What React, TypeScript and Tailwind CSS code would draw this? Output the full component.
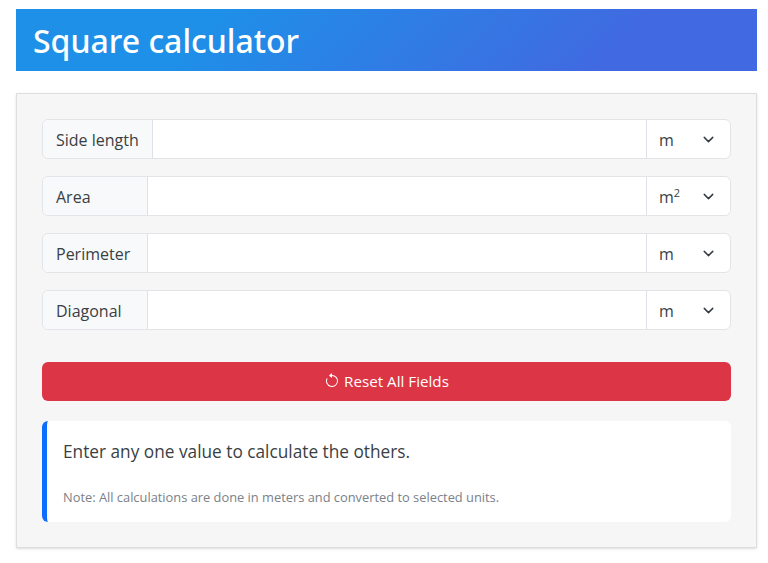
import { ChevronDown } from "lucide-react";

const rows = [
  { label: "Side length", unit: "m", sup: false },
  { label: "Area", unit: "m", sup: true },
  { label: "Perimeter", unit: "m", sup: false },
  { label: "Diagonal", unit: "m", sup: false },
];

export default function App() {
  return (
    <div className="w-[768px] h-[563px] overflow-hidden bg-white pt-[9px] pl-4 pr-[11px] font-['Open_Sans',sans-serif]">
      <div className="h-[62px] flex items-center pl-[17px] bg-[linear-gradient(135deg,#1e90e8_25%,#4169e1_80%)]">
        <h1 className="text-[32px] pt-[2px] leading-none font-medium text-white font-['Noto_Sans',sans-serif]">Square calculator</h1>
      </div>

      <div className="mt-[22px] h-[455px] bg-[#f6f6f6] border border-[#dedede] shadow-sm pt-[25px] px-[25px]">
        <div className="flex flex-col gap-[17px]">
          {rows.map((r) => (
            <div key={r.label} className="h-10 flex bg-white rounded-md border border-[#e2e4e7] text-[#212529]">
              <div className="flex items-center pt-px px-[13px] bg-[#f8f9fa] border-r border-[#dee2e6] rounded-l-md text-base text-[#3a3f44]">
                <span className={r.label === "Side length" ? "" : "w-[78px]"}>{r.label}</span>
              </div>
              <input className="flex-1 min-w-0 outline-none bg-white" />
              <div className="w-[84px] flex items-center justify-between pt-px pl-[12px] pr-[13px] border-l border-[#dee2e6] text-base text-[#3a3f44]">
                <span>
                  {r.unit}
                  {r.sup && <sup className="text-[11px]">2</sup>}
                </span>
                <ChevronDown size={17} strokeWidth={2} className="text-[#343a40]" />
              </div>
            </div>
          ))}
        </div>

        <button className="mt-[32px] w-full h-[39px] pb-px flex items-center justify-center gap-[4px] bg-[#dc3545] rounded-md text-white text-[15.2px]">
          <svg width="16" height="16" viewBox="0 0 16 16" fill="currentColor">
            <path fillRule="evenodd" d="M8 3a5 5 0 1 1-4.546 2.914.5.5 0 0 0-.908-.417A6 6 0 1 0 8 2z" />
            <path d="M8 4.466V.534a.25.25 0 0 0-.41-.192L5.23 2.308a.25.25 0 0 0 0 .384l2.36 1.966A.25.25 0 0 0 8 4.466" />
          </svg>
          Reset All Fields
        </button>

        <div className="mt-[20px] h-[101px] bg-white rounded-md border-l-[5px] border-[#0d6efd] pl-[16px] pt-[19px]">
          <p className="text-[17.25px] leading-6 text-[#3a3f44]">Enter any one value to calculate the others.</p>
          <p className="mt-[23px] text-[12.85px] leading-5 text-[#7a8188]">Note: All calculations are done in meters and converted to selected units.</p>
        </div>
      </div>
    </div>
  );
}
